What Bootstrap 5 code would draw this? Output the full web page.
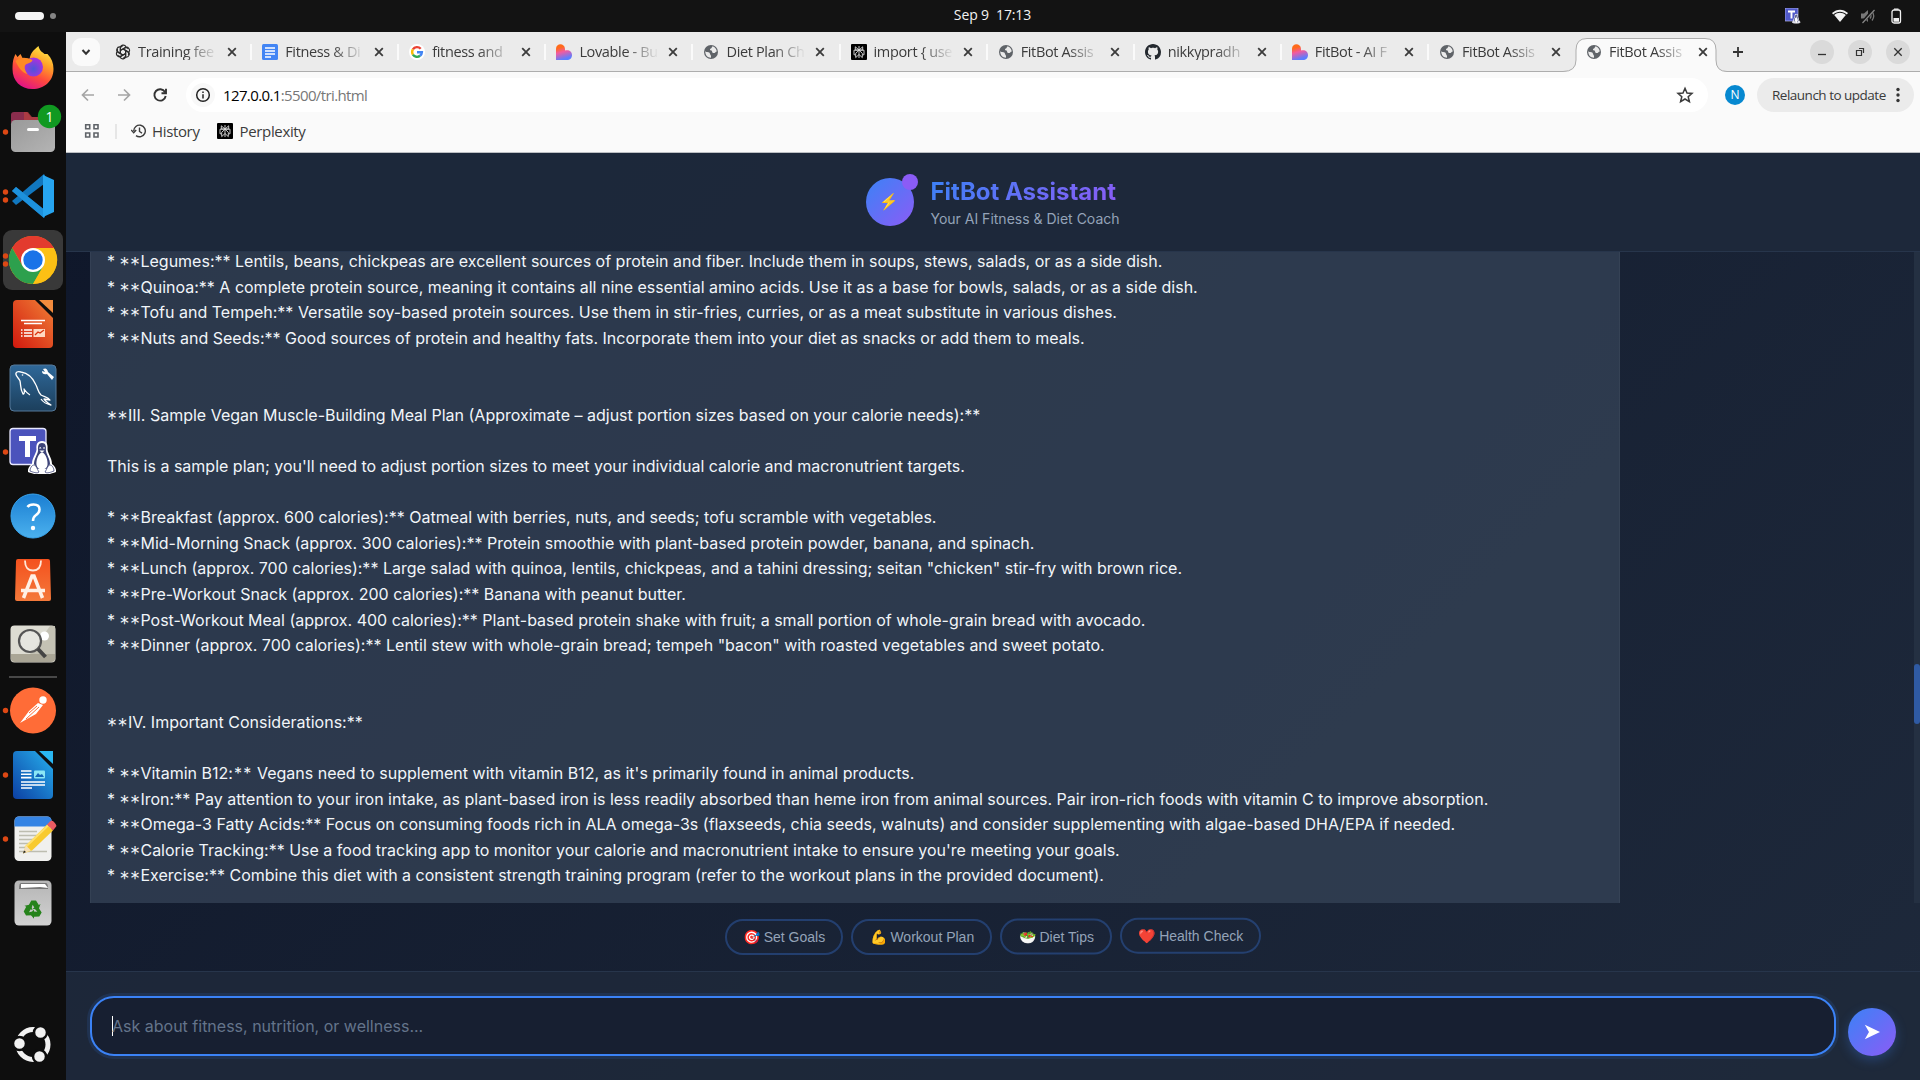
<!DOCTYPE html>
<html lang="en">
<head>
<meta charset="utf-8">
<title>FitBot Assistant</title>
<link href="https://cdn.jsdelivr.net/npm/bootstrap@5.3.0/dist/css/bootstrap.min.css" rel="stylesheet">
<style>
body{width:1920px;height:1080px;overflow:hidden;background:#0e0e0e;font-family:"Open Sans","Noto Sans",sans-serif;font-size:15px;line-height:1.2}
svg{display:block;flex:none}
.topbar{height:32px;background:#131313;color:#f2f2f2;padding:0 18px 0 15px}
.topbar>div{width:33.333%}
.pill{width:29px;height:8px;border-radius:4px;background:#f5f5f5}
.wsdot{width:6px;height:6px;border-radius:50%;background:#858585;margin-left:6px}
.clock{font-size:14px;letter-spacing:-.12px;white-space:pre;padding:0 0 2px 68px}
.dock{width:66px;padding-top:4px;background:#0e0e0e}
.dock .sep{height:2px;width:48px;margin-left:9px;background:#484848}
.dockgap{height:78px}
.tabstrip{height:40px;background:#ebebeb;border-bottom:1px solid #adadad;padding-left:6px}
.chev{width:28px;height:28px;border-radius:9px;background:#fafafa;margin:6px 3px 0 0}
.tabx{width:147px;height:39px;padding:0 10px 0 12px;position:relative;margin-left:.1px}
.tabx+.tabx::before{content:"";position:absolute;left:0;top:12px;width:2px;height:16px;background:#fafafa}
.tabttl{width:85px;margin-left:7px;margin-right:1px;white-space:nowrap;color:#3c3c3c;font-size:14.5px;letter-spacing:-.35px;-webkit-mask-image:linear-gradient(90deg,#000 55%,transparent 94%)}
.tabx.now{z-index:2}
.tabx.now::before{display:none}
.tabx.now .tabbg{position:absolute;left:-11px;top:6px;z-index:-1}
.winbtns{padding:1px 10px 0 11px}
.winbtn{width:24px;height:24px;border-radius:50%;background:#dadada}
.toolbarx{height:46px;background:#fafafa;padding:6px 6px 6px 12px}
.omni{width:1522px;background:#fff;border-radius:17px;padding:0 14px 0 5px;margin-left:18px}
.sinfo{width:24px;height:24px;border-radius:50%;background:#f8f8f8}
.addr{letter-spacing:-.62px;margin-left:8px;color:#777;font-size:15px;padding-bottom:1px}
.ava{width:20px;height:20px;border-radius:50%;background:#0688d0;color:#fff;font-size:12px;margin-left:17px}
.relaunch{width:157px;border-radius:17px;background:#ebebeb;color:#3a3a3a;font-size:13.5px;letter-spacing:-.5px;margin-left:12px;padding:0 14px 0 15px}
.marks{height:35px;background:#fafafa;border-bottom:1px solid #bcbfc3;padding:0 0 8px 18px;color:#3c3c3c;letter-spacing:-.35px}
.marks .bar{width:2px;height:15px;background:#e6e6e6;margin:0 14px 0 15px}
.app{font-family:Inter,sans-serif;background:linear-gradient(135deg,#0f172a,#1e293b);color:#f1f5f9;height:927px}
.hdr{height:99px;background:rgba(30,41,59,.95);border-bottom:1px solid #27354b;padding-top:25px}
.logo{width:48px;height:48px;border-radius:50%;background:linear-gradient(135deg,#3b82f6,#8b5cf6);position:relative;font-size:15.5px;padding-right:3px}
.logo::after{content:"";position:absolute;top:-4px;right:-4px;width:16px;height:16px;border-radius:50%;background:#8b5cf6}
.brand{font-size:24px;font-weight:700;line-height:29px;margin-top:-1px;background:linear-gradient(135deg,#3b82f6,#8b5cf6);-webkit-background-clip:text;color:transparent;width:max-content}
.tagl{font-size:14px;line-height:17px;color:#94a3b8;margin-top:4px}
.chat{height:651px;overflow:hidden;padding-left:24px}
.msg{width:1530px;background:rgba(51,65,85,.8);border:1px solid rgba(148,163,184,.08);border-width:0 1px;padding:0 16px;font-size:16px;line-height:25.6px;white-space:pre-wrap}
.msg>div{margin-top:-2.8px}
.st{font-size:20px;line-height:0;vertical-align:-4.6px;letter-spacing:.45px;font-weight:300}
.wd{letter-spacing:1.2px}
.sbar{width:6px;background:#243042;padding-top:412px}
.thumb{height:60px;border-radius:3px;background:#2f5aa3}
.quick{height:68px;padding-top:16px}
.qb{height:36px;border:2px solid rgba(59,130,246,.3);border-radius:20px;padding:0 16.2px;font:14px/32px "Liberation Sans",sans-serif;color:#94a3b8;background:rgba(30,41,59,.3);white-space:pre}
.lift1{transform:translateY(-.5px)}
.lift2{transform:translateY(-1.3px)}
.ask{height:109px;border-top:1px solid #27354b;background:rgba(30,41,59,.85);padding:24px 24px 24px}
.field{width:1746px;height:60px;border:2px solid #3b82f6;border-radius:24px;background:#171f31;box-shadow:0 0 0 3px rgba(59,130,246,.12);padding:0 20px;font-size:16px;color:#64748b}
.field .hint{margin-left:-1px;padding-top:2px}
.caret{width:1px;height:20px;background:#fff}
.send{width:48px;height:48px;border-radius:50%;background:linear-gradient(135deg,#3b82f6,#8b5cf6);box-shadow:0 4px 12px rgba(59,130,246,.3);margin-left:12px}
</style>
<script src="https://cdn.jsdelivr.net/npm/bootstrap@5.3.0/dist/js/bootstrap.bundle.min.js"></script>
</head>
<body class="d-flex flex-column">
<svg width="0" height="0" class="position-absolute">
<defs>
<linearGradient id="gLov" x1="0" y1="0" x2=".3" y2="1"><stop offset=".25" stop-color="#ff6a1a"/><stop offset=".55" stop-color="#f25ba0"/><stop offset="1" stop-color="#5c7dff"/></linearGradient>
<linearGradient id="gFf" x1=".8" y1="0" x2=".3" y2="1"><stop offset="0" stop-color="#fff04a"/><stop offset=".35" stop-color="#ffa127"/><stop offset=".65" stop-color="#ff4b3c"/><stop offset="1" stop-color="#e0108a"/></linearGradient>
<radialGradient id="gFf2" cx=".5" cy=".6"><stop offset="0" stop-color="#4d55d8"/><stop offset="1" stop-color="#a234dc"/></radialGradient>
<linearGradient id="gGrey" x2="1" y2="1"><stop stop-color="#999"/><stop offset="1" stop-color="#b4b4b4"/></linearGradient>
<linearGradient id="gImp" x1="1" x2="0" y2="1"><stop stop-color="#f08136"/><stop offset="1" stop-color="#d2180e"/></linearGradient>
<linearGradient id="gWri" x1="1" x2="0" y2="1"><stop stop-color="#27b2ee"/><stop offset="1" stop-color="#0c3fa3"/></linearGradient>
<linearGradient id="gSql" x2="0" y2="1"><stop stop-color="#2f6899"/><stop offset="1" stop-color="#1c3f5c"/></linearGradient>
<linearGradient id="gHlp" x2="0" y2="1"><stop stop-color="#1a7ed2"/><stop offset="1" stop-color="#4bb1ee"/></linearGradient>
<linearGradient id="gBag" x2="0" y2="1"><stop stop-color="#f4511e"/><stop offset="1" stop-color="#f4793a"/></linearGradient>
<linearGradient id="gTr" x2="0" y2="1"><stop stop-color="#b5b5b5"/><stop offset="1" stop-color="#d2d2d2"/></linearGradient>
<symbol id="i-x" viewBox="0 0 16 16"><path d="M4.2 4.2l7.6 7.6M11.8 4.2l-7.6 7.6" stroke="#3c3c3c" stroke-width="1.8"/></symbol>
<symbol id="i-globe" viewBox="0 0 16 16"><circle cx="8" cy="8" r="7" fill="#5f6368"/><path d="M2.2 7.3C4 8.800 6.500 7.600 6.800 9.300S8.300 11 8 13.800C4.500 13.800 2.200 11 2.200 7.300zM9.500 2.300C12 2.900 13.500 5 13.800 7.400c-1.600.3-1.800 2-3.600 1.500S9.700 6.500 8 6.400 6.800 4.400 8.300 4.200z" fill="#ebebeb"/></symbol>
<symbol id="i-lov" viewBox="0 0 16 16"><path d="M0 16V5C0-1.200 8.800-1.200 9 5v1.500c4-1 7 1 7 4.500 0 3-2 5-5 5z" fill="url(#gLov)"/></symbol>
<symbol id="i-perp" viewBox="0 0 16 16"><rect width="16" height="16" rx="1" fill="#000"/><path d="M8 2v12M4.300 2.800L8 6l3.700-3.200V6H4.300zM3 6.200h10v4.600h-1.700v2.800L8 10.500l-3.300 3.100v-2.800H3zM4.700 10.800V9.300L8 6.200l3.300 3.100v1.500" stroke="#ddd" stroke-width=".9" fill="none"/></symbol>
<symbol id="i-gpt" viewBox="0 0 16 16"><g fill="none" stroke="#2b2b2b" stroke-width="1.150"><path id="petal" d="M5.300 9.600V4.100c0-3.400 4.500-4 5.700-1.200M5.400 6.500l4.200-2.400c1.200-.7 2.900-.4 3.800.8"/><use href="#petal" transform="rotate(60 8 8)"/><use href="#petal" transform="rotate(120 8 8)"/><use href="#petal" transform="rotate(180 8 8)"/><use href="#petal" transform="rotate(240 8 8)"/><use href="#petal" transform="rotate(300 8 8)"/></g></symbol>
<symbol id="i-doc" viewBox="0 0 16 16"><rect width="16" height="16" rx="1.500" fill="#4285f4"/><path d="M3 4h10M3 7h10M3 10h10M3 13h6" stroke="#fff" stroke-width="1.500"/></symbol>
<symbol id="i-goo" viewBox="0 0 16 16"><circle cx="8" cy="8" r="8" fill="#fff"/><g fill="none" stroke-width="2.400"><path d="M11.700 4.700A4.900 4.900 0 0 0 3.900 5.400" stroke="#ea4335"/><path d="M3.900 5.400a4.900 4.900 0 0 0 0 5.200" stroke="#fbbc05"/><path d="M3.900 10.600a4.900 4.900 0 0 0 7.200 1.200" stroke="#34a853"/><path d="M11.100 11.800A4.900 4.900 0 0 0 12.900 8.200H8" stroke="#4285f4"/></g></symbol>
<symbol id="i-git" viewBox="0 0 16 16"><path fill="#24292f" d="M8 0C3.580 0 0 3.580 0 8c0 3.540 2.290 6.530 5.470 7.590.4.070.55-.17.55-.38 0-.19-.01-.82-.01-1.490-2.010.37-2.530-.49-2.690-.94-.09-.23-.48-.94-.82-1.130-.28-.15-.68-.52-.01-.53.630-.01 1.080.58 1.230.82.720 1.210 1.870.87 2.330.66.070-.52.280-.87.510-1.070-1.780-.2-3.640-.89-3.640-3.950 0-.87.310-1.590.820-2.150-.08-.2-.36-1.020.08-2.120 0 0 .67-.21 2.200.82.640-.18 1.320-.27 2-.27s1.360.09 2 .27c1.530-1.040 2.200-.82 2.200-.82.440 1.100.160 1.920.080 2.120.510.560.820 1.270.820 2.150 0 3.070-1.870 3.750-3.650 3.950.290.250.540.730.540 1.480 0 1.070-.01 1.930-.01 2.200 0 .210.150.460.550.380A8.010 8.010 0 0 0 16 8c0-4.420-3.580-8-8-8z"/></symbol>
<symbol id="i-tux" viewBox="0 0 30 36"><path d="M15 1c-5 0-6 4-5.500 8.500C9 14 5 18 5 24c-3 2-4.500 5-4 8 3 1 6 2.500 10 2h8c4 .5 7-1 10-2 .5-3-1-6-4-8 0-6-4-10-4.500-14.500C21 5 20 1 15 1z" fill="#fff"/><path d="M15 3c-3.800 0-4.300 3.500-3.900 7.500C10.500 15 7 18.500 7 24l3.500 5h9l3.500-5c0-5.500-3.500-9-4.100-13.500C19.300 6.500 18.800 3 15 3z" fill="#3d4478"/><path d="M15 12c-4 2-6 8-5.500 13 1 6 10 6 11 0C21 20 19 14 15 12zM12 8.500q1.200-3 2.500 0M15.800 8.500q1.200-3 2.500 0M12.500 10.500h5L15 13z" fill="#fff"/><path d="M3 31c0-3 2-6 4-6s3 4 5 7c-2 2-6 0-9-1zM27 31c0-3-2-6-4-6s-3 4-5 7c2 2 6 0 9-1z" fill="#fff" stroke="#3d4478" stroke-width=".8"/></symbol>
</defs>
</svg>

<header class="topbar d-flex align-items-center">
  <div class="d-flex align-items-center"><span class="pill"></span><span class="wsdot"></span></div>
  <div class="clock text-center">Sep 9  17:13</div>
  <div class="d-flex align-items-center justify-content-end">
    <svg width="16" height="16" style="margin-right:31px"><rect width="13" height="13" fill="#5059c9" stroke="#b5b8ed" stroke-width=".7"/><path d="M3 3.500h7M6.500 3.500V10.500" stroke="#fff" stroke-width="1.900"/><use href="#i-tux" x="6.500" y="5.500" width="9.500" height="10.500"/></svg>
    <svg width="16" height="14" viewBox="0 0 16 14" style="margin-right:12px"><path d="M0 4C5-.5 11-.5 16 4l-1.200 1.500C10.500 1.800 5.500 1.800 1.200 5.500z" fill="#f2f2f2"/><path d="M2.200 6c3.500-2.900 8-2.900 11.600 0L8 13z" fill="#f2f2f2"/></svg>
    <svg width="16" height="16" style="margin-right:14px"><path d="M1 5.500h3L8 2v12L4 10.500H1z" fill="#777"/><path d="M10 5.500q2 2.500 0 5M12 3.500q3.500 4.500 0 9" stroke="#777" stroke-width="1.300" fill="none"/><path d="M14 1L2 15" stroke="#131313" stroke-width="3"/><path d="M14.500 2L2.500 15" stroke="#888" stroke-width="1.200"/></svg>
    <svg width="12" height="16"><rect x="2" y="2" width="8.500" height="13" rx="2" fill="none" stroke="#f2f2f2" stroke-width="1.300"/><path d="M4 0.600h4.500v1.200H4z M3.500 10h5.500v3.800H3.500z" fill="#f2f2f2"/></svg>
  </div>
</header>

<div class="d-flex flex-fill">
<nav class="dock">
  <svg width="66" height="64"><g transform="translate(.5 -3)"><path d="M12 36c0-8 1-11 3-15l2 3 3-3 2 4 7 1c1-6 4-9 9-13 1 5 4 6 6 8l3 0c4 4 6 9 6 15 0 12-9 20-21 20S12 48 12 36z" fill="url(#gFf)"/><circle cx="33" cy="34" r="9.500" fill="url(#gFf2)"/><path d="M15 28c5-4 10-4 17-1-1 3-4 3-6 4-3 2-2 6 1 10-5-1-9-6-12-13z" fill="#ff8a25"/></g></svg>
  <svg width="66" height="64"><path d="M11 44V15q0-3 3-3h13l4 5h22v27z" fill="#8a2d4d"/><path d="M24 12h4l4 5h14v6H24z" fill="#b9413f" opacity=".7"/><rect x="11" y="20" width="44" height="32" rx="4.500" fill="url(#gGrey)"/><rect x="27" y="28" width="12" height="3" rx="1.500" fill="#fff"/><circle cx="49.500" cy="16.500" r="11.700" fill="#109921"/><circle cx="5.500" cy="32" r="2.700" fill="#dd4814"/><text x="49.500" y="22" text-anchor="middle" font-size="14" fill="#fff">1</text></svg>
  <svg width="66" height="64"><path d="M12 27l4-4 30 24-2 7z" fill="#1070b8"/><path d="M12 37l4 4 32-24-4-7z" fill="#1177bf"/><path d="M12 27l4-4 31 25-3 6z" fill="#1d91dc"/><path d="M43 11l11 5v32l-11 5z" fill="#27a5f0"/><g fill="#dd4814"><circle cx="5.500" cy="28" r="2.700"/><circle cx="5.500" cy="36" r="2.700"/></g></svg>
  <svg width="66" height="64"><rect x="3" y="2" width="60" height="60" rx="9" fill="#393939"/><circle cx="33" cy="32" r="24" fill="#fbbc04"/><path d="M33 32L12.200 20A24 24 0 0 1 53.800 20z" fill="#e33b2e"/><path d="M33 20H53.800A24 24 0 0 0 12.200 20L22.600 38z" fill="#e33b2e"/><path d="M12.200 20A24 24 0 0 0 33 56L43.400 38 33 32 22.600 38z" fill="#2da04d"/><path d="M53.800 20H33L43.400 38 33 56A24 24 0 0 0 53.800 20z" fill="#fcc014"/><circle cx="33" cy="32" r="12" fill="#fff"/><circle cx="33" cy="32" r="9.700" fill="#1a73e8"/><g fill="#dd4814"><circle cx="5.500" cy="28" r="2.700"/><circle cx="5.500" cy="36" r="2.700"/></g></svg>
  <svg width="66" height="64"><path d="M17 8h18l18 18v26q0 4-4 4H17q-4 0-4-4V12q0-4 4-4z" fill="url(#gImp)"/><path d="M39 8h14v13z" fill="#f28b3d"/><path d="M21 28.500h24M24 31.500h18M21 38h1.500M21 41h1.500M21 44h1.500M24 38h8M24 41h8M24 44h8" stroke="#fff" stroke-width="1.500"/><rect x="33.500" y="37" width="11.500" height="8" fill="#ffd9c2"/><path d="M35 43l3-3 2 1 4-3" stroke="#d9340f" fill="none" stroke-width="1.300"/></svg>
  <svg width="66" height="64"><rect x="10" y="9" width="46" height="46" rx="4" fill="url(#gSql)" stroke="#55799a"/><path d="M16 17q1-2 5-1c7 1 12 6 15 13 2 4 2 7 5 10 3 2 7 2 9 5l-6-1c1 2 4 4 7 6-5-1-8-3-10-6M16 17c-1 3 3 5 4 8 1 4 0 8 3 13 1 1 2-3 1-5 2 3 4 5 6 6" stroke="#fff" stroke-width="1.300" fill="none" stroke-linejoin="round"/><circle cx="22.500" cy="19" r=".8" fill="#fff"/><path d="M43 13q4-2 5 3l6 5-2 3-5-6q-5 1-5-3l3 1z" fill="#fff"/></svg>
  <svg width="66" height="64"><rect x="10" y="8.500" width="36" height="36" rx="3" fill="#4b53bc" stroke="#e8e8ff" stroke-width="1.300"/><path d="M19 18.500h17M27.500 17v20" stroke="#fff" stroke-width="5"/><use href="#i-tux" x="26.500" y="20" width="31" height="36"/><circle cx="5.500" cy="32" r="2.700" fill="#dd4814"/></svg>
  <svg width="66" height="64"><circle cx="33" cy="32" r="22" fill="url(#gHlp)" stroke="#3aa5ed"/><path d="M27.500 23q1.500-2.500 6-2.500 6 0 6 5 0 3.500-4 6-2.500 1.800-2.500 5.500" stroke="#fff" stroke-width="2.500" fill="none"/><circle cx="33" cy="44" r="2.200" fill="#fff"/></svg>
  <svg width="66" height="64"><path d="M18 11h30q2 0 2 2l1 38q0 2-2 2H17q-2 0-2-2l1-38q0-2 2-2z" fill="url(#gBag)"/><path d="M25 12.500q0 10 8 10t8-10" stroke="#ffe7d8" stroke-width="1.800" fill="none"/><path d="M23.500 50L32 28h2l8.500 22M21 42.500h24" stroke="#fff0e5" stroke-width="3.500" fill="none"/></svg>
  <svg width="66" height="64"><rect x="10.500" y="13.500" width="45" height="37" rx="4" fill="#dddcd2"/><path d="M11 42h44v5q0 3-4 3H15q-4 0-4-3z" fill="#aaa696"/><path d="M30 42l20-28h5v28z" fill="#c4c2b4"/><circle cx="44.500" cy="24" r="4.500" fill="#fff"/><circle cx="30" cy="29" r="11" fill="#e8e8e4" fill-opacity=".8" stroke="#555" stroke-width="2.200"/><path d="M38 37l7.500 8" stroke="#444" stroke-width="4"/></svg>
  <div class="sep"></div>
  <svg width="66" height="64"><circle cx="33" cy="32.500" r="23" fill="#ff6c37"/><path d="M20 45l9-12 9-8 5 2-7 9-9 5z" fill="#fff"/><circle cx="43" cy="22" r="3.700" fill="#fff"/><path d="M29 35l8-7M26 41l13-12" stroke="#ff6c37"/><circle cx="5.500" cy="32.500" r="2.700" fill="#dd4814"/></svg>
  <svg width="66" height="64"><g transform="translate(0 1)"><path d="M17 8h18l18 18v26q0 4-4 4H17q-4 0-4-4V12q0-4 4-4z" fill="url(#gWri)"/><path d="M39 8h14v13z" fill="#2ab7f2"/><path d="M21 28h10.500M21 31.300h10.500M21 34.600h10.500M21 39h24M21 42h24M21 45h11" stroke="#fff" stroke-width="1.600"/><rect x="34" y="27.500" width="11" height="8" rx="1" fill="#8be7f5"/><path d="M35 34l3-4 2 2 2-1 2 3z" fill="#1466b8"/><circle cx="5.500" cy="32" r="2.700" fill="#dd4814"/></g></svg>
  <svg width="66" height="64"><g transform="translate(0 .5)"><rect x="14.500" y="10" width="37" height="44.500" rx="4.500" fill="#f0f0ee"/><path d="M14.500 20v-5.500q0-4.500 4.500-4.500h28q4.500 0 4.500 4.500V20z" fill="#3584e4"/><path d="M19 25h18M19 29h18M19 33h14M19 37h10M19 41h7M19 45h28" stroke="#bdbdb0" stroke-width="1.600"/><path d="M23 47l3-8 21-21 6 6-21 20z" fill="#f8ca2e"/><path d="M25 41l23-22" stroke="#ffe06a" stroke-width="2"/><path d="M23 47l3-8 5 5z" fill="#f4dfb7"/><path d="M23 47l1-3 2 1.500z" fill="#222"/><path d="M47 18l3-3q2-1.500 4 .500t2.500 4L53 24z" fill="#ec5b62"/><circle cx="5.500" cy="32.500" r="2.700" fill="#dd4814"/></g></svg>
  <svg width="66" height="64"><rect x="14.500" y="10.500" width="37" height="45" rx="4.500" fill="url(#gTr)"/><path d="M19 19q0-6 2-6h25q2 0 2 6z" fill="#777"/><path d="M21 14h24l3 4-8-1-19 1z" fill="#fff"/><g transform="translate(33 39.500)" fill="#26831b"><g id="rc"><path d="M-4.800-3.200L-1.700-9H3L5.800-4.500 7.500-5.500 5.500.300-.5-.8 1.300-1.900-.3-4.800-1.500-1.500z"/></g><use href="#rc" transform="rotate(120)"/><use href="#rc" transform="rotate(240)"/></g></svg>
  <div class="dockgap"></div>
  <svg width="66" height="64"><circle cx="33" cy="32.500" r="15" fill="none" stroke="#f2f2f2" stroke-width="5"/><g fill="#f2f2f2" stroke="#0e0e0e" stroke-width="2.500"><circle cx="19.500" cy="31.500" r="6.500"/><circle cx="40.500" cy="20.500" r="6.500"/><circle cx="39.500" cy="44.500" r="6.500"/></g></svg>
</nav>

<main class="flex-fill">
  <div class="tabstrip d-flex">
    <div class="chev d-flex align-items-center justify-content-center"><svg width="12" height="12"><path d="M2.500 4l3.500 3.800L9.500 4" fill="none" stroke="#333" stroke-width="2"/></svg></div>
    <div class="d-flex">
    <div class="tabx d-flex align-items-center"><svg width="16" height="16"><use href="#i-gpt"/></svg><span class="tabttl">Training fee</span><svg width="16" height="16"><use href="#i-x"/></svg></div>
    <div class="tabx d-flex align-items-center"><svg width="16" height="16"><use href="#i-doc"/></svg><span class="tabttl">Fitness &amp; Di</span><svg width="16" height="16"><use href="#i-x"/></svg></div>
    <div class="tabx d-flex align-items-center"><svg width="16" height="16"><use href="#i-goo"/></svg><span class="tabttl">fitness and</span><svg width="16" height="16"><use href="#i-x"/></svg></div>
    <div class="tabx d-flex align-items-center"><svg width="16" height="16"><use href="#i-lov"/></svg><span class="tabttl">Lovable - Bu</span><svg width="16" height="16"><use href="#i-x"/></svg></div>
    <div class="tabx d-flex align-items-center"><svg width="16" height="16"><use href="#i-globe"/></svg><span class="tabttl">Diet Plan Ch</span><svg width="16" height="16"><use href="#i-x"/></svg></div>
    <div class="tabx d-flex align-items-center"><svg width="16" height="16"><use href="#i-perp"/></svg><span class="tabttl">import { use</span><svg width="16" height="16"><use href="#i-x"/></svg></div>
    <div class="tabx d-flex align-items-center"><svg width="16" height="16"><use href="#i-globe"/></svg><span class="tabttl">FitBot Assis</span><svg width="16" height="16"><use href="#i-x"/></svg></div>
    <div class="tabx d-flex align-items-center"><svg width="16" height="16"><use href="#i-git"/></svg><span class="tabttl">nikkypradh</span><svg width="16" height="16"><use href="#i-x"/></svg></div>
    <div class="tabx d-flex align-items-center"><svg width="16" height="16"><use href="#i-lov"/></svg><span class="tabttl">FitBot - AI F</span><svg width="16" height="16"><use href="#i-x"/></svg></div>
    <div class="tabx d-flex align-items-center"><svg width="16" height="16"><use href="#i-globe"/></svg><span class="tabttl">FitBot Assis</span><svg width="16" height="16"><use href="#i-x"/></svg></div>
    <div class="tabx now d-flex align-items-center"><svg class="tabbg" width="164" height="34"><path d="M0 33.500Q13 33.500 13 22V12Q13 .5 24 .5H142Q153 .5 153 12V22Q153 33.500 164 33.500V34H0z" fill="#fafafa"/><path d="M0 33.500Q13 33.500 13 22V12Q13 .5 24 .5H142Q153 .5 153 12V22Q153 33.500 164 33.500" fill="none" stroke="#adadad"/></svg><svg width="16" height="16"><use href="#i-globe"/></svg><span class="tabttl">FitBot Assis</span><svg width="16" height="16"><use href="#i-x"/></svg></div>
    </div>
    <div class="winbtns d-flex align-items-center flex-fill justify-content-between">
      <svg width="12" height="12"><path d="M6 1v10M1 6h10" stroke="#333" stroke-width="1.800"/></svg>
      <div class="d-flex" style="gap:14px">
        <span class="winbtn"><svg width="24" height="24"><path d="M8 14.500h8" stroke="#333" stroke-width="1.300"/></svg></span>
        <span class="winbtn"><svg width="24" height="24"><path d="M8.500 10.500h5v5h-5zM11 8.500h4.500V13" fill="none" stroke="#333" stroke-width="1.200"/></svg></span>
        <span class="winbtn"><svg width="24" height="24"><path d="M8.300 8.300l7.400 7.400M15.700 8.300l-7.400 7.400" stroke="#333" stroke-width="1.300"/></svg></span>
      </div>
    </div>
  </div>
  <div class="toolbarx d-flex align-items-stretch">
    <div class="d-flex align-items-center" style="gap:20px">
      <svg width="16" height="16" style="margin-left:2px"><path d="M14 8H3M8 2.500L2.500 8 8 13.500" fill="none" stroke="#a5a5a5" stroke-width="1.700"/></svg>
      <svg width="16" height="16"><path d="M2 8h11M8 2.500L13.500 8 8 13.500" fill="none" stroke="#a5a5a5" stroke-width="1.700"/></svg>
      <svg width="16" height="16"><path d="M13 5A5.700 5.700 0 1 0 13.700 9M14 1.800V6.200H9.500" fill="none" stroke="#333" stroke-width="1.900"/></svg>
    </div>
    <div class="omni d-flex align-items-center">
      <span class="sinfo d-flex align-items-center justify-content-center"><svg width="16" height="16"><circle cx="8" cy="8" r="6.300" fill="none" stroke="#222" stroke-width="1.500"/><path d="M8 7.200V11.500M8 4.500V6" stroke="#222" stroke-width="1.500"/></svg></span>
      <span class="addr"><span class="text-black">127.0.0.1</span>:5500/tri.html</span>
      <svg width="18" height="18" class="ms-auto"><path d="M9 2.300l2 4.700 5 .4-3.800 3.300 1.200 5L9 13l-4.400 2.700 1.200-5L2 7.400l5-.4z" fill="none" stroke="#3c3c3c" stroke-width="1.500"/></svg>
    </div>
    <span class="ava align-self-center d-flex align-items-center justify-content-center">N</span>
    <div class="relaunch d-flex align-items-center justify-content-between"><span class="text-nowrap">Relaunch to update</span><svg width="4" height="16"><g fill="#333"><circle cx="2" cy="2.500" r="1.700"/><circle cx="2" cy="8" r="1.700"/><circle cx="2" cy="13.500" r="1.700"/></g></svg></div>
  </div>
  <div class="marks d-flex align-items-center">
    <svg width="16" height="16"><path d="M1.700 1.700h4v4h-4zM10 1.700h4v4h-4zM1.700 10h4v4h-4zM10 10h4v4h-4z" fill="none" stroke="#5f6368" stroke-width="1.600"/></svg>
    <span class="bar"></span>
    <svg width="16" height="16"><path d="M2.700 8A5.800 5.800 0 1 1 5 12.600M8.500 4.500V8.500l2.500 1.700M0.200 7l2.500 2.700L5.200 7" fill="none" stroke="#3c3c3c" stroke-width="1.400"/></svg>
    <span style="margin:0 17px 0 5px">History</span>
    <svg width="16" height="16"><use href="#i-perp"/></svg><span style="margin-left:7px">Perplexity</span>
  </div>

  <div class="app">
    <div class="hdr d-flex justify-content-center align-items-start">
      <div class="logo d-flex align-items-center justify-content-center">⚡</div>
      <div class="ms-3"><div class="brand">FitBot Assistant</div><div class="tagl">Your AI Fitness &amp; Diet Coach</div></div>
    </div>
    <div class="chat d-flex justify-content-between">
      <div class="msg"><div>* <span class="st">**</span>Legumes:** Lentils, beans, chickpeas are excellent sources of protein and fiber. Include them in soups, stews, salads, or as a side dish.
* <span class="st">**</span>Quinoa:** A complete protein source, meaning it contains all nine essential amino acids. Use it as a base for bowls, salads, or as a side dish.
* <span class="st">**</span>Tofu and Tempeh:** Versatile soy-based protein sources. Use them in stir-fries, curries, or as a meat substitute in various dishes.
* <span class="st">**</span>Nuts and Seeds:** Good sources of protein and healthy fats. Incorporate them into your diet as snacks or add them to meals.


<span class="st">**</span>III. Sample Vegan Muscle-Building Meal Plan (Approximate – adjust portion sizes based on your calorie needs):**

This is a sample plan; you'll need to adjust portion sizes to meet your individual calorie and macronutrient targets.

* <span class="st">**</span>Breakfast (approx. 600 calories):** Oatmeal with berries, nuts, and seeds; tofu scramble with vegetables.
* <span class="st">**</span>Mid-Morning Snack (approx. 300 calories):** Protein smoothie with plant-based protein powder, banana, and spinach.
* <span class="st">**</span>Lunch (approx. 700 calories):** Large salad with quinoa, lentils, chickpeas, and a tahini dressing; seitan "chicken" stir-fry with brown rice.
* <span class="st">**</span>Pre-Workout Snack (approx. 200 calories):** Banana with peanut butter.
* <span class="st">**</span>Post-Workout Meal (approx. 400 calories):** Plant-based protein shake with fruit; a small portion of whole-grain bread with avocado.
* <span class="st">**</span>Dinner (approx. 700 calories):** Lentil stew with whole-grain bread; tempeh "bacon" with roasted vegetables and sweet potato.


<span class="st">**</span>IV. Important Considerations:**

* <span class="st">**</span>Vitamin B12<span class="wd">:**</span> Vegans need to supplement with vitamin B12, as it's primarily found in animal products.
* <span class="st">**</span>Iron:** Pay attention to your iron intake, as plant-based iron is less readily absorbed than heme iron from animal sources. Pair iron-rich foods with vitamin C to improve absorption.
* <span class="st">**</span>Omega-3 Fatty Acids:** Focus on consuming foods rich in ALA omega-3s (flaxseeds, chia seeds, walnuts) and consider supplementing with algae-based DHA/EPA if needed.
* <span class="st">**</span>Calorie Tracking:** Use a food tracking app to monitor your calorie and macronutrient intake to ensure you're meeting your goals.
* <span class="st">**</span>Exercise:** Combine this diet with a consistent strength training program (refer to the workout plans in the provided document).</div></div>
      <div class="sbar"><div class="thumb"></div></div>
    </div>
    <div class="quick d-flex justify-content-center gap-2">
      <div class="qb">🎯 Set Goals</div><div class="qb">💪 Workout Plan</div><div class="qb lift1">🥗 Diet Tips</div><div class="qb lift2">❤️ Health Check</div>
    </div>
    <div class="ask d-flex align-items-end">
      <div class="field d-flex align-items-center"><span class="caret"></span><span class="hint">Ask about fitness, nutrition, or wellness...</span></div>
      <div class="send d-flex align-items-center justify-content-center"><svg width="16" height="16"><path d="M.8 .8L16 8 .8 15.200 5 8z" fill="#fff"/></svg></div>
    </div>
  </div>
</main>
</div>
</body>
</html>
